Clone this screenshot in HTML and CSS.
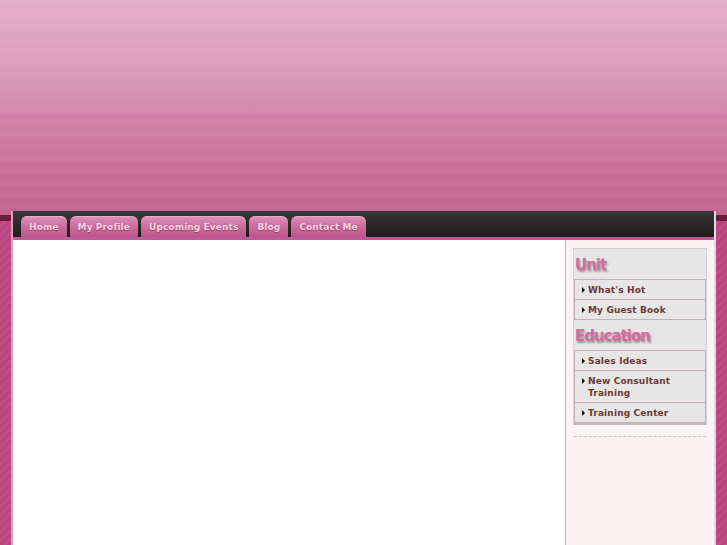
FILE: index.html
```html
<!DOCTYPE html>
<html>
<head>
<meta charset="utf-8">
<link rel="stylesheet" href="styles.css">
</head>
<body>
<div class="header"></div>
<div class="page">
  <nav class="nav">
    <a class="tab">Home</a>
    <a class="tab">My Profile</a>
    <a class="tab">Upcoming Events</a>
    <a class="tab">Blog</a>
    <a class="tab">Contact Me</a>
  </nav>
  <div class="columns">
    <main class="main"></main>
    <aside class="sidebar">
      <div class="box">
        <h2 class="box-title">Unit</h2>
        <ul class="menu">
          <li class="item"><span class="arrow"></span><span>What's Hot</span></li>
          <li class="item"><span class="arrow"></span><span>My Guest Book</span></li>
        </ul>
        <h2 class="box-title">Education</h2>
        <ul class="menu">
          <li class="item"><span class="arrow"></span><span>Sales Ideas</span></li>
          <li class="item"><span class="arrow"></span><span>New Consultant Training</span></li>
          <li class="item"><span class="arrow"></span><span>Training Center</span></li>
        </ul>
      </div>
      <div class="divider"></div>
    </aside>
  </div>
</div>
</body>
</html>
```

FILE: styles.css
```css
html, body {
  margin: 0;
  padding: 0;
  height: 100%;
}
body {
  font-family: "DejaVu Sans", Verdana, sans-serif;
  background:
    linear-gradient(#6b1a3c, #6b1a3c) 0 215px / 100% 6px no-repeat,
    linear-gradient(#c4668f, #c4668f) 0 211px / 100% 4px no-repeat,
    repeating-linear-gradient(135deg, #b8457e 0 3px, #bd4d86 3px 6px);
  overflow: hidden;
}
.header {
  height: 211px;
  background:
    repeating-linear-gradient(180deg, rgba(255,255,255,0.035) 0 6px, rgba(255,255,255,0) 6px 12px),
    linear-gradient(180deg, #e4adc6 0%, #dc9ebc 30%, #d283ab 55%, #c96f99 80%, #c4648e 100%);
}
.page {
  margin-left: 11px;
  width: 701px;
  border-left: 2px solid #e29ac0;
  border-right: 2px solid #efd3e2;
  min-height: 334px;
  background: #fff;
}
.nav {
  height: 21px;
  padding: 5px 0 0 8px;
  display: flex;
  gap: 3px;
  background: linear-gradient(180deg, #3b3639 0%, #2c292b 50%, #1e1c1e 100%);
}
.tab {
  display: block;
  height: 21px;
  line-height: 22px;
  padding: 0 8px;
  font-size: 9px;
  font-weight: bold;
  letter-spacing: 0.1px;
  color: #f3d3e3;
  text-shadow: 0 1px 1px rgba(110, 30, 70, 0.5);
  border-radius: 6px 6px 0 0;
  background: linear-gradient(180deg, #e091bb 0%, #cf6fa0 45%, #bd5688 100%);
  box-shadow: inset 0 1px 0 rgba(255,255,255,0.25);
}
.columns {
  display: flex;
  border-top: 3px solid #c05b98;
  min-height: 305px;
}
.main {
  width: 552px;
  background: #fff;
}
.sidebar {
  flex: 1;
  background: #f9f3f3;
  border-left: 1px solid #d9a3b4;
  padding: 8px 0 0 7px;
}
.box {
  width: 132px;
  background: #e6e6e6;
  border: 1px solid #d2d2d2;
  border-bottom: 2px solid #bebebe;
}
.box-title {
  margin: 0;
  padding: 7px 0 5px 1px;
  font-size: 15px;
  line-height: 18px;
  font-weight: bold;
  letter-spacing: -1px;
  color: #d46b9e;
  text-shadow: 1px 2px 2px rgba(70, 70, 70, 0.5);
}
.menu {
  list-style: none;
  margin: 0;
  padding: 0;
}
.item {
  display: flex;
  align-items: flex-start;
  padding: 4px 4px 3px 7px;
  font-size: 9px;
  font-weight: bold;
  letter-spacing: 0.15px;
  line-height: 12px;
  color: #6f3838;
  border: 1px solid #bdb3b3;
  border-top-color: #c8b2b2;
  border-bottom: none;
}
.menu .item:last-child {
  border-bottom: 1px solid #c8b2b2;
}
.arrow {
  flex: none;
  width: 0;
  height: 0;
  margin: 3px 3px 0 0;
  border-left: 3px solid #111;
  border-top: 3px solid transparent;
  border-bottom: 3px solid transparent;
}
.divider {
  width: 132px;
  margin: 11px 0 0 1px;
  border-top: 1px dashed #d6b7c0;
}
```
